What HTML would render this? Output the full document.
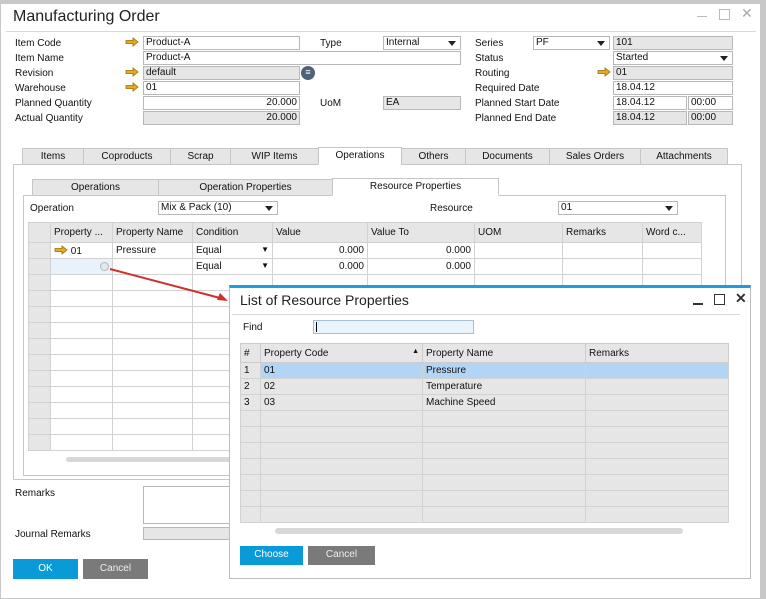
<!DOCTYPE html>
<html><head><meta charset="utf-8"><style>
*{box-sizing:border-box;margin:0;padding:0}
body{width:766px;height:599px;background:#fff;font-family:"Liberation Sans",sans-serif;font-size:10px;color:#111;position:relative;overflow:hidden}
.a{position:absolute;white-space:nowrap}
.f{position:absolute;height:14px;border:1px solid #b8b8b8;background:#fff;padding:0 2px;line-height:12px;font-size:10px}
.g{background:#e6e6e6}
.r{text-align:right}
.dd::after{content:"";position:absolute;right:4px;top:4px;border-left:4px solid transparent;border-right:4px solid transparent;border-top:5px solid #222}
.arr{position:absolute;width:14px;height:10px}
.tab{position:absolute;height:17px;border:1px solid #c6c6c6;background:#e6e6e6;text-align:center;line-height:15px}
.tab.on{background:#fff;border-bottom-color:#fff}
table{border-collapse:collapse;position:absolute;table-layout:fixed}
td{border:1px solid #d2d2d2;height:16px;padding:0 3px;overflow:hidden;white-space:nowrap;font-size:10px}
</style></head><body>
<div class="a" style="left:0;top:0;width:766px;height:599px;border:1px solid #c8c8c8;border-right:6px solid #c8c8c8;border-top:4px solid #c8c8c8"></div>
<div class="a" style="left:13px;top:8px;font-size:16px;color:#222">Manufacturing Order</div>
<div class="a" style="left:697px;top:16px;width:10px;height:1px;background:#bbb"></div>
<div class="a" style="left:719px;top:9px;width:11px;height:11px;border:1px solid #bbb"></div>
<div class="a" style="left:741px;top:5px;color:#aaa;font-size:14px">✕</div>
<div class="a" style="left:6px;top:31px;width:750px;height:1px;background:#d8d8d8"></div>

<svg width="0" height="0" style="position:absolute"><defs><symbol id="ar" viewBox="0 0 14 10"><path d="M1 3.5h7V1l5 4-5 4V6.5H1z" fill="#e8a820" stroke="#9a6c08" stroke-width="0.8"/></symbol></defs></svg>

<div class="a" style="left:15px;top:38px">Item Code</div>
<div class="a" style="left:15px;top:53px">Item Name</div>
<div class="a" style="left:15px;top:68px">Revision</div>
<div class="a" style="left:15px;top:83px">Warehouse</div>
<div class="a" style="left:15px;top:98px">Planned Quantity</div>
<div class="a" style="left:15px;top:113px">Actual Quantity</div>
<svg class="arr" style="left:125px;top:37px"><use href="#ar"/></svg>
<svg class="arr" style="left:125px;top:67px"><use href="#ar"/></svg>
<svg class="arr" style="left:125px;top:82px"><use href="#ar"/></svg>
<div class="f" style="left:143px;top:36px;width:157px">Product-A</div>
<div class="f" style="left:143px;top:51px;width:318px">Product-A</div>
<div class="f g" style="left:143px;top:66px;width:157px">default</div>
<div class="a" style="left:301px;top:66px;width:14px;height:14px;border-radius:50%;background:#50627a;color:#fff;font-size:9px;text-align:center;line-height:13px">≡</div>
<div class="f" style="left:143px;top:81px;width:157px">01</div>
<div class="f r" style="left:143px;top:96px;width:157px">20.000</div>
<div class="f g r" style="left:143px;top:111px;width:157px">20.000</div>
<div class="a" style="left:320px;top:38px">Type</div>
<div class="f dd" style="left:383px;top:36px;width:78px">Internal</div>
<div class="a" style="left:320px;top:98px">UoM</div>
<div class="f g" style="left:383px;top:96px;width:78px">EA</div>

<div class="a" style="left:475px;top:38px">Series</div>
<div class="a" style="left:475px;top:53px">Status</div>
<div class="a" style="left:475px;top:68px">Routing</div>
<div class="a" style="left:475px;top:83px">Required Date</div>
<div class="a" style="left:475px;top:98px">Planned Start Date</div>
<div class="a" style="left:475px;top:113px">Planned End Date</div>
<div class="f dd" style="left:533px;top:36px;width:77px">PF</div>
<div class="f g" style="left:613px;top:36px;width:120px">101</div>
<div class="f dd" style="left:613px;top:51px;width:120px">Started</div>
<svg class="arr" style="left:597px;top:67px"><use href="#ar"/></svg>
<div class="f g" style="left:613px;top:66px;width:120px">01</div>
<div class="f" style="left:613px;top:81px;width:120px">18.04.12</div>
<div class="f" style="left:613px;top:96px;width:74px">18.04.12</div>
<div class="f" style="left:688px;top:96px;width:45px">00:00</div>
<div class="f g" style="left:613px;top:111px;width:74px">18.04.12</div>
<div class="f g" style="left:688px;top:111px;width:45px">00:00</div>

<div class="a" style="left:13px;top:164px;width:729px;height:316px;border:1px solid #c6c6c6"></div>
<div class="tab" style="left:22px;top:148px;width:62px">Items</div>
<div class="tab" style="left:83px;top:148px;width:88px">Coproducts</div>
<div class="tab" style="left:170px;top:148px;width:61px">Scrap</div>
<div class="tab" style="left:230px;top:148px;width:89px">WIP Items</div>
<div class="tab on" style="left:318px;top:147px;width:84px;height:18px">Operations</div>
<div class="tab" style="left:401px;top:148px;width:65px">Others</div>
<div class="tab" style="left:465px;top:148px;width:85px">Documents</div>
<div class="tab" style="left:549px;top:148px;width:92px">Sales Orders</div>
<div class="tab" style="left:640px;top:148px;width:88px">Attachments</div>

<div class="a" style="left:23px;top:195px;width:703px;height:281px;border:1px solid #c6c6c6"></div>
<div class="tab" style="left:32px;top:179px;width:127px">Operations</div>
<div class="tab" style="left:158px;top:179px;width:175px">Operation Properties</div>
<div class="tab on" style="left:332px;top:178px;width:167px;height:18px">Resource Properties</div>
<div class="a" style="left:30px;top:203px">Operation</div>
<div class="f dd" style="left:158px;top:201px;width:120px">Mix &amp; Pack (10)</div>
<div class="a" style="left:430px;top:203px">Resource</div>
<div class="f dd" style="left:558px;top:201px;width:120px">01</div>

<table style="left:28px;top:222px;width:673px">
<colgroup><col style="width:22px"><col style="width:62px"><col style="width:80px"><col style="width:80px"><col style="width:95px"><col style="width:107px"><col style="width:88px"><col style="width:80px"><col style="width:59px"></colgroup>
<tr style="background:#e6e6e6"><td style="height:20px"></td><td>Property ...</td><td>Property Name</td><td>Condition</td><td>Value</td><td>Value To</td><td>UOM</td><td>Remarks</td><td>Word c...</td></tr>
<tr><td class="g"></td><td><svg width="14" height="10" style="vertical-align:-1px"><use href="#ar"/></svg> 01</td><td>Pressure</td><td>Equal <span style="float:right;font-size:8px">▼</span></td><td class="r">0.000</td><td class="r">0.000</td><td></td><td></td><td></td></tr>
<tr><td class="g"></td><td style="background:#e8f2fb"></td><td></td><td>Equal <span style="float:right;font-size:8px">▼</span></td><td class="r">0.000</td><td class="r">0.000</td><td></td><td></td><td></td></tr>
<tr><td class="g"></td><td></td><td></td><td></td><td></td><td></td><td></td><td></td><td></td></tr>
<tr><td class="g"></td><td></td><td></td><td></td><td></td><td></td><td></td><td></td><td></td></tr>
<tr><td class="g"></td><td></td><td></td><td></td><td></td><td></td><td></td><td></td><td></td></tr>
<tr><td class="g"></td><td></td><td></td><td></td><td></td><td></td><td></td><td></td><td></td></tr>
<tr><td class="g"></td><td></td><td></td><td></td><td></td><td></td><td></td><td></td><td></td></tr>
<tr><td class="g"></td><td></td><td></td><td></td><td></td><td></td><td></td><td></td><td></td></tr>
<tr><td class="g"></td><td></td><td></td><td></td><td></td><td></td><td></td><td></td><td></td></tr>
<tr><td class="g"></td><td></td><td></td><td></td><td></td><td></td><td></td><td></td><td></td></tr>
<tr><td class="g"></td><td></td><td></td><td></td><td></td><td></td><td></td><td></td><td></td></tr>
<tr><td class="g"></td><td></td><td></td><td></td><td></td><td></td><td></td><td></td><td></td></tr>
<tr><td class="g"></td><td></td><td></td><td></td><td></td><td></td><td></td><td></td><td></td></tr>
</table>
<div class="a" style="left:100px;top:262px;width:9px;height:9px;border-radius:50%;border:1px solid #b0b8c4;background:#e4e8ee"></div>
<div class="a" style="left:66px;top:457px;width:170px;height:5px;border-radius:3px;background:#d8d8d8"></div>

<div class="a" style="left:15px;top:488px">Remarks</div>
<div class="f" style="left:143px;top:486px;width:100px;height:38px"></div>
<div class="a" style="left:15px;top:529px">Journal Remarks</div>
<div class="f g" style="left:143px;top:527px;width:100px;height:13px"></div>
<div class="a" style="left:13px;top:559px;width:65px;height:20px;background:#0a9ad8;color:#fff;text-align:center;line-height:19px">OK</div>
<div class="a" style="left:83px;top:559px;width:65px;height:20px;background:#7a7a7a;color:#eee;text-align:center;line-height:19px">Cancel</div>

<svg class="a" style="left:0;top:0" width="766" height="599"><line x1="110" y1="269" x2="220" y2="298" stroke="#d0302a" stroke-width="2"/><path d="M228 301l-11-1 3-7z" fill="#d0302a"/></svg>

<div class="a" style="left:229px;top:285px;width:522px;height:294px;background:#fff;border:1px solid #bdbdbd;border-top:3px solid #1a9ee0"></div>
<div class="a" style="left:240px;top:292px;font-size:14px;color:#222">List of Resource Properties</div>
<div class="a" style="left:693px;top:303px;width:10px;height:2px;background:#333"></div>
<div class="a" style="left:714px;top:294px;width:11px;height:11px;border:1.5px solid #333"></div>
<div class="a" style="left:735px;top:290px;font-size:14px;font-weight:bold;color:#333">✕</div>
<div class="a" style="left:232px;top:314px;width:508px;height:1px;background:#d8d8d8"></div>
<div class="a" style="left:243px;top:322px">Find</div>
<div class="f" style="left:313px;top:320px;width:161px;background:#eaf4fc;border-color:#a8c0d4"><span style="display:inline-block;width:1px;height:10px;background:#000;margin-top:1px"></span></div>
<table style="left:240px;top:343px;width:488px;background:#e6e6e6">
<colgroup><col style="width:20px"><col style="width:162px"><col style="width:163px"><col style="width:143px"></colgroup>
<tr><td style="height:19px;border-color:#ccc">#</td><td style="border-color:#ccc">Property Code<span style="float:right;font-size:7px">▲</span></td><td style="border-color:#ccc">Property Name</td><td style="border-color:#ccc">Remarks</td></tr>
<tr style="background:#b3d5f5"><td style="background:#e6e6e6">1</td><td>01</td><td>Pressure</td><td></td></tr>
<tr><td>2</td><td>02</td><td>Temperature</td><td></td></tr>
<tr><td>3</td><td>03</td><td>Machine Speed</td><td></td></tr>
<tr><td></td><td></td><td></td><td></td></tr>
<tr><td></td><td></td><td></td><td></td></tr>
<tr><td></td><td></td><td></td><td></td></tr>
<tr><td></td><td></td><td></td><td></td></tr>
<tr><td></td><td></td><td></td><td></td></tr>
<tr><td></td><td></td><td></td><td></td></tr>
<tr><td></td><td></td><td></td><td></td></tr>
</table>
<div class="a" style="left:275px;top:528px;width:408px;height:6px;border-radius:3px;background:#d8d8d8"></div>
<div class="a" style="left:240px;top:546px;width:63px;height:19px;background:#0a9ad8;color:#fff;text-align:center;line-height:18px">Choose</div>
<div class="a" style="left:308px;top:546px;width:67px;height:19px;background:#7a7a7a;color:#eee;text-align:center;line-height:18px">Cancel</div>
</body></html>
